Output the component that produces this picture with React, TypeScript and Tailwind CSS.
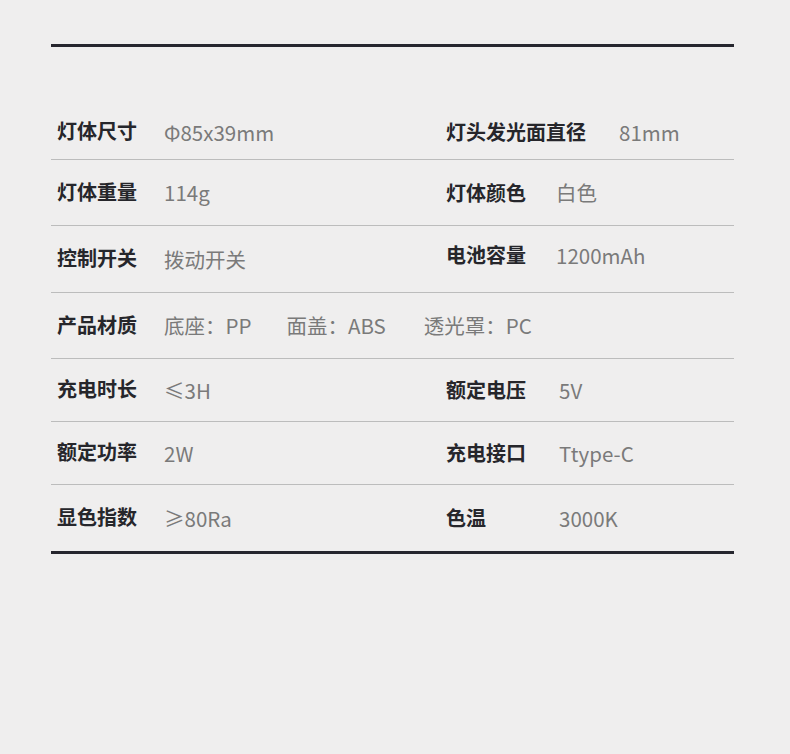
import React from "react";

const font = { fontFamily: '"Noto Sans CJK SC", "Noto Sans", sans-serif' };

function Label({ children }: { children: React.ReactNode }) {
  return <span className="text-[20px] font-bold text-[#26262b] leading-none">{children}</span>;
}
function Value({ children, className = "" }: { children: React.ReactNode; className?: string }) {
  return <span className={`text-[20.5px] text-[#7a7a7a] leading-none ${className}`}>{children}</span>;
}

function Row({
  h,
  l,
  lv,
  r,
  rv,
  rgap = "ml-[30px]",
  rshift = "",
  border = true,
}: {
  h: string;
  l: string;
  lv: string;
  r?: string;
  rv?: string;
  rgap?: string;
  rshift?: string;
  border?: boolean;
}) {
  return (
    <div className={`flex items-center ${h} ${border ? "border-b border-[#bcbcbc]" : ""}`}>
      <div className="w-[395px] flex items-center pl-[6px]">
        <div className="w-[107px]">
          <Label>{l}</Label>
        </div>
        <Value>{lv}</Value>
      </div>
      {r && (
        <div className={`flex items-center ${rshift}`}>
          <Label>{r}</Label>
          <Value className={rgap}>{rv}</Value>
        </div>
      )}
    </div>
  );
}

export default function App() {
  return (
    <div className="w-[790px] h-[754px] bg-[#efeeee]" style={font}>
      <div className="pt-[44px] pl-[51px]">
        <div className="w-[683px]">
          <div className="h-[3px] bg-[#26262e]" />
          <div className="h-[58px]" />
          <Row h="h-[55px]" l="灯体尺寸" lv="Φ85x39mm" r="灯头发光面直径" rv="81mm" rgap="ml-[33px]" />
          <Row h="h-[66px]" l="灯体重量" lv="114g" r="灯体颜色" rv="白色" rgap="ml-[30px]" />
          <Row h="h-[67px]" l="控制开关" lv="拨动开关" r="电池容量" rv="1200mAh" rgap="ml-[30px]" rshift="mb-[8px]" />
          <div className="flex items-center h-[66px] border-b border-[#bcbcbc] pl-[6px]">
            <div className="w-[107px]">
              <Label>产品材质</Label>
            </div>
            <Value>底座：PP</Value>
            <Value className="ml-[35px]">面盖：ABS</Value>
            <Value className="ml-[38px]">透光罩：PC</Value>
          </div>
          <Row h="h-[63px]" l="充电时长" lv="≤3H" r="额定电压" rv="5V" rgap="ml-[33px]" />
          <Row h="h-[63px]" l="额定功率" lv="2W" r="充电接口" rv="Ttype-C" rgap="ml-[33px]" />
          <Row h="h-[66px]" l="显色指数" lv="≥80Ra" r="色温" rv="3000K" rgap="ml-[73px]" border={false} />
          <div className="h-[3px] bg-[#26262e]" />
        </div>
      </div>
    </div>
  );
}
